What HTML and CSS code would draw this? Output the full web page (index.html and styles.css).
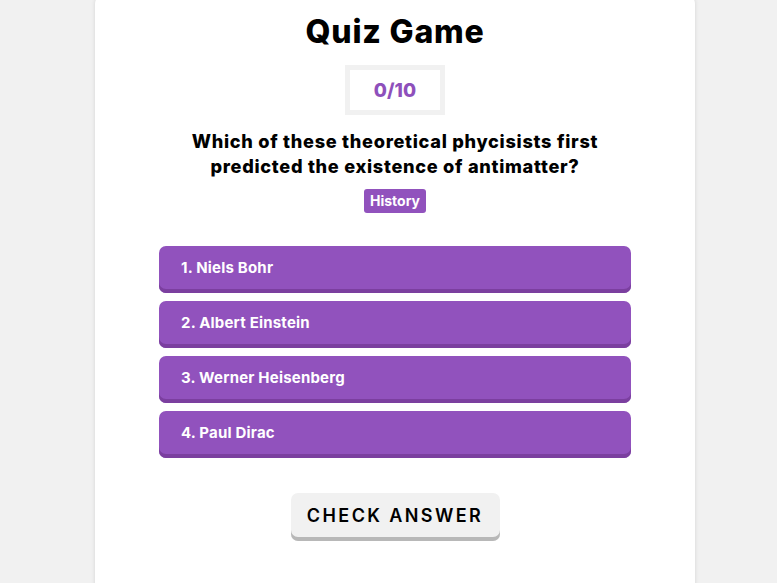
FILE: index.html
```html
<!DOCTYPE html>
<html>
<head>
<meta charset="utf-8">
<link rel="stylesheet" href="styles.css">
</head>
<body>
<main class="card">
  <h1 class="title">Quiz Game</h1>
  <div class="score">0/10</div>
  <h2 class="question">Which of these theoretical phycisists first predicted the existence of antimatter?</h2>
  <span class="tag">History</span>
  <ul class="options">
    <li class="option">1. Niels Bohr</li>
    <li class="option">2. Albert Einstein</li>
    <li class="option">3. Werner Heisenberg</li>
    <li class="option">4. Paul Dirac</li>
  </ul>
  <button class="check">CHECK ANSWER</button>
</main>
</body>
</html>
```
FILE: styles.css
```css
* { box-sizing: border-box; }
html, body { margin: 0; padding: 0; }
body {
  background: #f1f1f1;
  font-family: "Inter", "Open Sans", sans-serif;
  height: 583px;
  overflow: hidden;
  padding-left: 13px;
}
.card {
  width: 600px;
  margin: -6px auto 0;
  background: #fff;
  border-radius: 10px;
  box-shadow: 0 0 4px rgba(0,0,0,0.12);
  display: flex;
  flex-direction: column;
  align-items: center;
  padding: 16px 0 60px;
  min-height: 700px;
}
.title {
  margin: 0;
  font-size: 32px;
  font-weight: 800;
  line-height: 44px;
  color: #000;
  letter-spacing: 0.8px;
}
.score {
  margin-top: 11px;
  width: 100px;
  height: 50px;
  border: 5px solid #f1f1f1;
  display: flex;
  align-items: center;
  justify-content: center;
  color: #8e50bb;
  font-weight: 800;
  font-size: 19px;
}
.question {
  margin: 14px 0 0;
  width: 440px;
  text-align: center;
  font-size: 18.2px;
  font-weight: 800;
  line-height: 25px;
  color: #000;
  letter-spacing: 0.7px;
}
.tag {
  margin-top: 10px;
  background: #9152bd;
  color: #fff;
  font-size: 14px;
  font-weight: 700;
  border-radius: 3px;
  padding: 0 6px;
  height: 24px;
  line-height: 24px;
}
.options {
  list-style: none;
  margin: 33px 0 0;
  padding: 0;
  width: 472px;
  display: flex;
  flex-direction: column;
  gap: 8px;
}
.option {
  height: 47px;
  background: #9152bd;
  border-radius: 7px;
  box-shadow: inset 0 -4px 0 #7b3f9f;
  color: #fff;
  font-weight: 700;
  font-size: 15px;
  letter-spacing: 0.2px;
  padding: 0 22px 4px;
  display: flex;
  align-items: center;
}
.check {
  margin-top: 35px;
  width: 209px;
  height: 48px;
  border: none;
  border-radius: 7px;
  background: #f1f1f1;
  box-shadow: inset 0 -4px 0 #b8b8b8;
  font-family: inherit;
  font-size: 18px;
  font-weight: 600;
  letter-spacing: 2.4px;
  color: #000;
  padding: 0 0 4px;
}
```
